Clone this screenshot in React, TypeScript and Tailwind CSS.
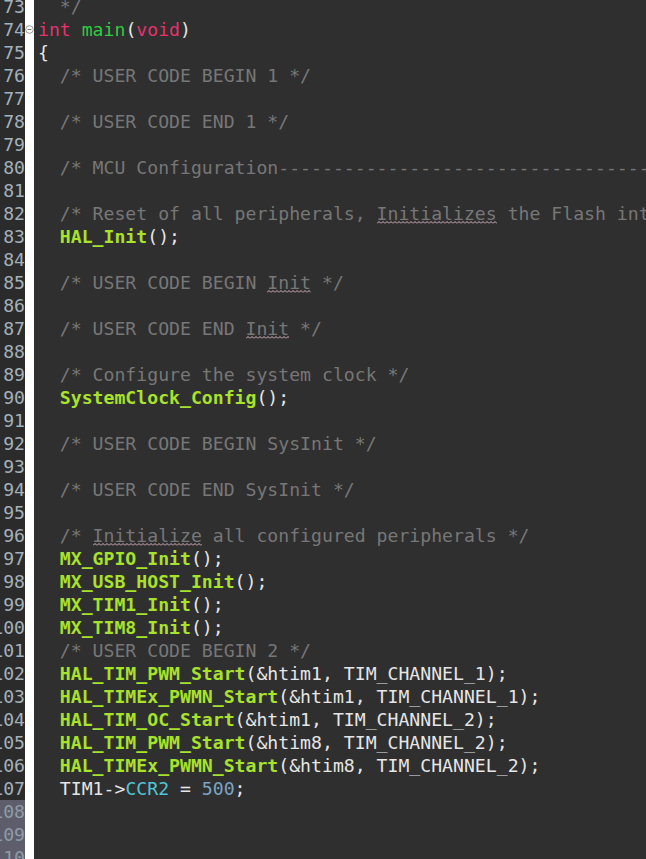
import React, { useId } from 'react';

type Kind = 'c' | 'w' | 'f' | 'k' | 'm' | 'p' | 'cy' | 'n';
type Tok = [string, Kind];

const styles: Record<Kind, string> = {
  c: 'text-[#777777]',
  w: 'text-[#777777]',
  f: 'text-[#a8e22a] font-bold',
  k: 'text-[#e3336c]',
  m: 'text-[#2fcc42]',
  p: 'text-[#e6e6e6]',
  cy: 'text-[#4fc6d8]',
  n: 'text-[#7aa4c6]',
};

const call = (name: string, args: string): Tok[] => [
  ['  ', 'p'],
  [name, 'f'],
  ['(' + args + ');', 'p'],
];

const cm = (s: string): Tok[] => [['  ' + s, 'c']];

const lines: { n: number; toks: Tok[]; fold?: boolean; sel?: boolean }[] = [
  { n: 73, toks: cm('*/') },
  { n: 74, fold: true, toks: [['int', 'k'], [' ', 'p'], ['main', 'm'], ['(', 'p'], ['void', 'k'], [')', 'p']] },
  { n: 75, toks: [['{', 'p']] },
  { n: 76, toks: cm('/* USER CODE BEGIN 1 */') },
  { n: 77, toks: [] },
  { n: 78, toks: cm('/* USER CODE END 1 */') },
  { n: 79, toks: [] },
  { n: 80, toks: cm('/* MCU Configuration--------------------------------------------------------*/') },
  { n: 81, toks: [] },
  {
    n: 82,
    toks: [
      ['  /* Reset of all peripherals, ', 'c'],
      ['Initializes', 'w'],
      [' the Flash interface and the Systick. */', 'c'],
    ],
  },
  { n: 83, toks: call('HAL_Init', '') },
  { n: 84, toks: [] },
  { n: 85, toks: [['  /* USER CODE BEGIN ', 'c'], ['Init', 'w'], [' */', 'c']] },
  { n: 86, toks: [] },
  { n: 87, toks: [['  /* USER CODE END ', 'c'], ['Init', 'w'], [' */', 'c']] },
  { n: 88, toks: [] },
  { n: 89, toks: cm('/* Configure the system clock */') },
  { n: 90, toks: call('SystemClock_Config', '') },
  { n: 91, toks: [] },
  { n: 92, toks: cm('/* USER CODE BEGIN SysInit */') },
  { n: 93, toks: [] },
  { n: 94, toks: cm('/* USER CODE END SysInit */') },
  { n: 95, toks: [] },
  { n: 96, toks: [['  /* ', 'c'], ['Initialize', 'w'], [' all configured peripherals */', 'c']] },
  { n: 97, toks: call('MX_GPIO_Init', '') },
  { n: 98, toks: call('MX_USB_HOST_Init', '') },
  { n: 99, toks: call('MX_TIM1_Init', '') },
  { n: 100, toks: call('MX_TIM8_Init', '') },
  { n: 101, toks: cm('/* USER CODE BEGIN 2 */') },
  { n: 102, toks: call('HAL_TIM_PWM_Start', '&htim1, TIM_CHANNEL_1') },
  { n: 103, toks: call('HAL_TIMEx_PWMN_Start', '&htim1, TIM_CHANNEL_1') },
  { n: 104, toks: call('HAL_TIM_OC_Start', '&htim1, TIM_CHANNEL_2') },
  { n: 105, toks: call('HAL_TIM_PWM_Start', '&htim8, TIM_CHANNEL_2') },
  { n: 106, toks: call('HAL_TIMEx_PWMN_Start', '&htim8, TIM_CHANNEL_2') },
  { n: 107, toks: [['  TIM1->', 'p'], ['CCR2', 'cy'], [' = ', 'p'], ['500', 'n'], [';', 'p']] },
  { n: 108, toks: [], sel: true },
  { n: 109, toks: [], sel: true },
  { n: 110, toks: [], sel: true },
];

function FoldIcon() {
  return (
    <svg width="9" height="9" viewBox="0 0 9 9">
      <circle cx="4.5" cy="4.5" r="3.8" fill="#ffffff" stroke="#9a9a9a" strokeWidth="1" />
      <line x1="2.5" y1="4.5" x2="6.5" y2="4.5" stroke="#7a7a7a" strokeWidth="1" />
    </svg>
  );
}

// spell-check squiggle under a word
function Squiggle({ text }: { text: string }) {
  const id = useId();
  return (
    <span className="relative inline-block h-[23px] align-top text-[#777777]">
      {text}
      <svg className="absolute left-0 top-[19px] h-[3px] w-full">
        <defs>
          <pattern id={id} width="4" height="3" patternUnits="userSpaceOnUse">
            <path d="M0 2.5 L2 0.5 L4 2.5" fill="none" stroke="#d9b3c2" strokeWidth="1" />
          </pattern>
        </defs>
        <rect width="100%" height="3" fill={`url(#${id})`} />
      </svg>
    </span>
  );
}

export default function App() {
  return (
    <div
      className="h-[859px] w-[646px] overflow-hidden bg-[#2f2f2f] text-[18.15px] leading-[23px]"
      style={{ fontFamily: '"DejaVu Sans Mono", "Liberation Mono", monospace' }}
    >
      <div className="-mt-[5px] flex flex-col">
        {lines.map((l) => (
          <div key={l.n} className="flex h-[23px]">
            {/* gutter with line numbers */}
            <div
              className={
                'w-[25px] shrink-0 overflow-hidden whitespace-pre ' +
                (l.sel ? 'bg-[#5d5d6c] text-[#8e9ca6]' : 'bg-[#2b2b2b] text-[#a3b1ba]')
              }
            >
              <span className="float-right">{l.n}</span>
            </div>
            {/* annotation / folding strip */}
            <div className="flex w-[9px] shrink-0 items-center justify-center bg-white">
              {l.fold && <FoldIcon />}
            </div>
            {/* code */}
            <div className="flex-1 overflow-hidden whitespace-pre pl-[4px]">
              {l.toks.map((t, i) =>
                t[1] === 'w' ? (
                  <Squiggle key={i} text={t[0]} />
                ) : (
                  <span key={i} className={styles[t[1]]}>
                    {t[0]}
                  </span>
                ),
              )}
            </div>
          </div>
        ))}
      </div>
    </div>
  );
}
